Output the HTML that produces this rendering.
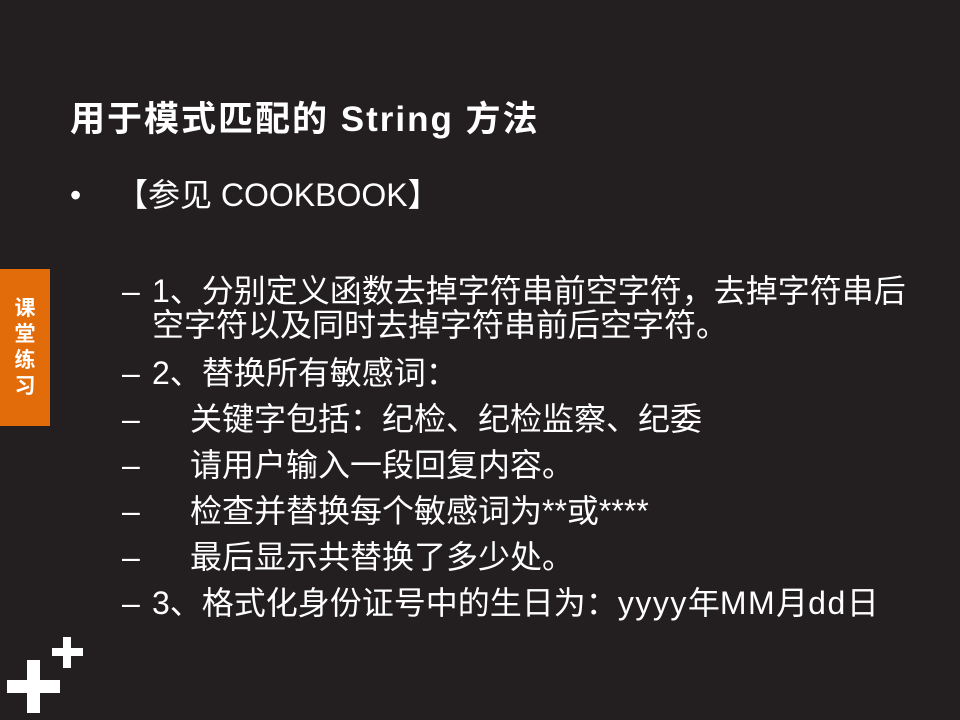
<!DOCTYPE html>
<html><head><meta charset="utf-8"><style>
body{margin:0;width:960px;height:720px;background:#231f20;position:relative;overflow:hidden;font-family:"Liberation Sans","Noto Sans CJK SC",sans-serif;color:#fff}
.a{position:absolute;white-space:nowrap}
.t{font-size:35px;font-weight:bold;left:70px;top:91px;letter-spacing:2px}
.l{font-size:32px;line-height:34px}
.w{position:absolute;background:#fff}
</style></head><body>
<div class="a t">用于模式匹配的 String 方法</div>
<div class="a l" style="left:70px;top:178px">•</div>
<div class="a l" style="left:116px;top:178px">【参见 COOKBOOK】</div>
<div class="a l" style="left:122px;top:274px">–</div>
<div class="a l" style="left:152px;top:274px">1、分别定义函数去掉字符串前空字符，去掉字符串后<br>空字符以及同时去掉字符串前后空字符。</div>
<div class="a l" style="left:122px;top:356px">–</div><div class="a l" style="left:152px;top:356px">2、替换所有敏感词：</div>
<div class="a l" style="left:122px;top:402px">–</div><div class="a l" style="left:190px;top:402px">关键字包括：纪检、纪检监察、纪委</div>
<div class="a l" style="left:122px;top:448px">–</div><div class="a l" style="left:190px;top:448px">请用户输入一段回复内容。</div>
<div class="a l" style="left:122px;top:494px">–</div><div class="a l" style="left:190px;top:494px">检查并替换每个敏感词为**或****</div>
<div class="a l" style="left:122px;top:540px">–</div><div class="a l" style="left:190px;top:540px">最后显示共替换了多少处。</div>
<div class="a l" style="left:122px;top:586px">–</div><div class="a l" style="left:152px;top:586px">3、格式化身份证号中的生日为：<span style="letter-spacing:1.5px">yyyy</span>年<span style="letter-spacing:1.5px">MM</span>月<span style="letter-spacing:1.5px">dd</span>日</div>
<div class="a" style="left:0;top:269px;width:50px;height:157px;background:#e36c0a"></div>
<div class="a" style="left:11px;top:296px;width:28px;font-size:21px;font-weight:bold;line-height:26px;text-align:center">课<br>堂<br>练<br>习</div>
<div class="w" style="left:27px;top:660px;width:13px;height:53px"></div>
<div class="w" style="left:7px;top:680px;width:53px;height:13px"></div>
<div class="w" style="left:63px;top:637px;width:8px;height:31px"></div>
<div class="w" style="left:52px;top:648px;width:31px;height:8px"></div>
</body></html>
